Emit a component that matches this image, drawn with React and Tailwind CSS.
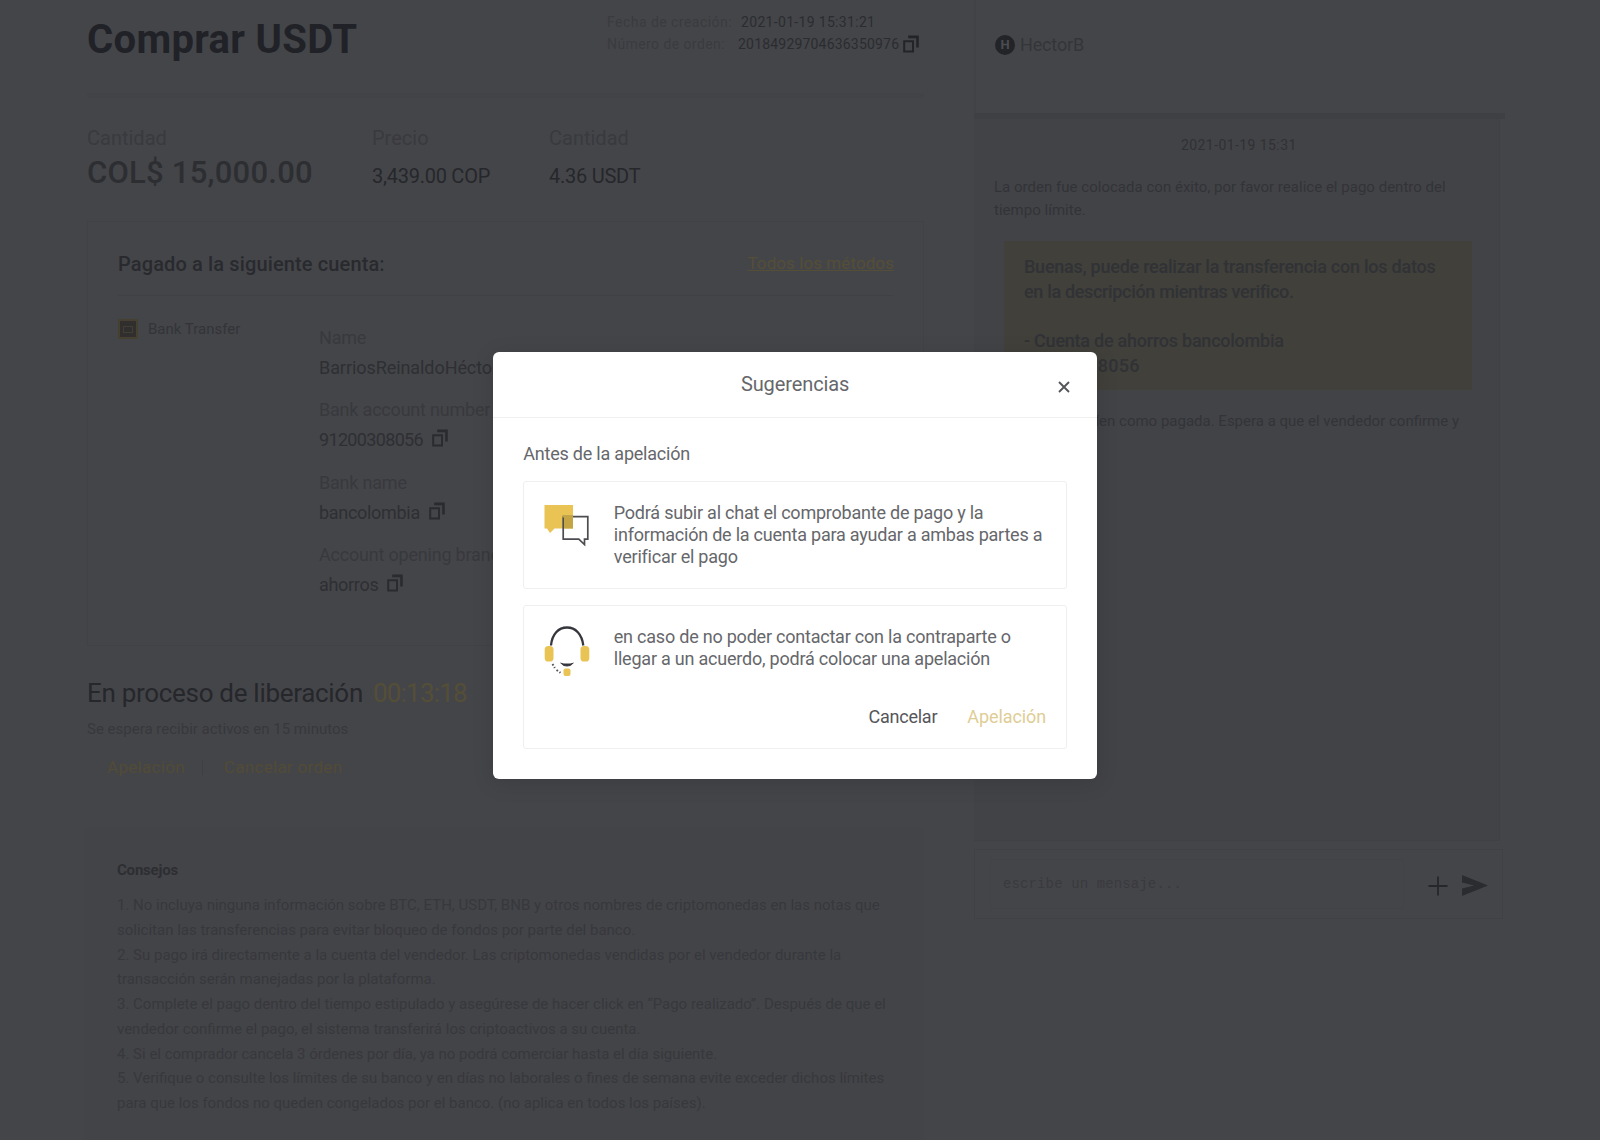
/**
 * P2P order page with the appeal suggestions dialog open.
 */
import React from 'react';

const STATS = [
  { label: 'Cantidad', value: 'COL$ 15,000.00', big: true },
  { label: 'Precio', value: '3,439.00 COP' },
  { label: 'Cantidad', value: '4.36 USDT' },
];

const ACCOUNT = [
  { label: 'Name', value: 'BarriosReinaldoHéctor', copy: false, track: 'tracking-[-0.07px]' },
  { label: 'Bank account number', value: '91200308056', copy: true, track: 'tracking-[-0.66px]' },
  { label: 'Bank name', value: 'bancolombia', copy: true, track: 'tracking-[-0.3px]' },
  { label: 'Account opening branch', value: 'ahorros', copy: true, track: 'tracking-[-0.3px]' },
];

const TIPS = [
  '1. No incluya ninguna información sobre BTC, ETH, USDT, BNB y otros nombres de criptomonedas en las notas que',
  'solicitan las transferencias para evitar bloqueo de fondos por parte del banco.',
  '2. Su pago irá directamente a la cuenta del vendedor. Las criptomonedas vendidas por el vendedor durante la',
  'transacción serán manejadas por la plataforma.',
  '3. Complete el pago dentro del tiempo estipulado y asegúrese de hacer click en “Pago realizado”. Después de que el',
  'vendedor confirme el pago, el sistema transferirá los criptoactivos a su cuenta.',
  '4. Si el comprador cancela 3 órdenes por día, ya no podrá comerciar hasta el día siguiente.',
  '5. Verifique o consulte los límites de su banco y en días no laborales o fines de semana evite exceder dichos límites',
  'para que los fondos no queden congelados por el banco. (no aplica en todos los países).',
];

const CopyIcon = ({ className }) => (
  <svg width="16" height="18" viewBox="0 0 16 18" fill="none" stroke="currentColor" strokeWidth="2" className={className}>
    <path d="M1.200 6.200h8.800v10.300H1.200z" />
    <path d="M5.200 1.900h9.300v10.600" strokeWidth="2.600" />
  </svg>
);

const ChatIcon = () => (
  <svg width="46" height="44" viewBox="0 0 46 44" fill="none">
    <path d="M0.500 0h28.500v23.500H10.500L6 28l-3-4.500H0.500z" fill="#e9c454" />
    <path d="M19.200 11.700h24.600v22.500h-3.300v5.400l-5.700-5.400H19.200z" stroke="#4c4d51" strokeWidth="1.700" />
    <path d="M18.300 10.800H29v12.700h-8.900V12.600h-1.800z" fill="#c4a443" />
  </svg>
);

const HeadsetIcon = () => (
  <svg width="46" height="52" viewBox="0 0 46 52" fill="none">
    <path d="M7 19.500C8 8 14.500 1.500 23 1.500S38 8 39.300 19.500" stroke="#36373c" strokeWidth="2.300" />
    <rect x="0.700" y="20" width="8.800" height="15.500" rx="3.600" fill="#e9c454" />
    <rect x="36.500" y="20" width="8.800" height="15.500" rx="3.600" fill="#e9c454" />
    <path d="M17.500 37.500c2.500 3.300 8.500 3.300 11 0l-2 0.600h-7z" fill="#36373c" stroke="#36373c" strokeWidth="1.200" />
    <path d="M8.500 38l2.300 4M12.500 44l4 2.800" stroke="#55565a" strokeWidth="2" strokeDasharray="1.800 1.800" />
    <rect x="19.500" y="42.500" width="7" height="7.500" rx="2" fill="#e9c454" />
  </svg>
);

const OrderHeader = () => (
  <header className="flex h-[98px] justify-between border-b-[5px] border-[#424347] pt-[11px]">
    <h1 className="mt-[5px] text-[40px] leading-[48px] font-bold tracking-[0.34px] text-[#202227]">Comprar USDT</h1>
    <div className="mr-[3px] w-[314px] text-sm leading-[22.5px]">
      <div className="flex gap-[9px]">
        <span className="tracking-[0.46px] text-[#3a3b3f]">Fecha de creación:</span>
        <span className="tracking-[0.32px] text-[#2b2c30]">2021-01-19 15:31:21</span>
      </div>
      <div className="-mt-px flex items-center">
        <span className="mr-[13px] tracking-[0.42px] text-[#3a3b3f]">Número de orden:</span>
        <span className="tracking-[0.19px] text-[#2b2c30]">20184929704636350976</span>
        <CopyIcon className="ml-[4px] text-[#232428]" />
      </div>
    </div>
  </header>
);

const Stats = () => (
  <div className="mt-7 grid h-[64px] grid-cols-[285px_177px_1fr]">
    {STATS.map((s, i) => (
      <div key={i}>
        <div className="text-xl leading-6 text-[#393a3e]">{s.label}</div>
        {s.big ? (
          <div className="mt-[5px] text-[31px] leading-9 font-medium tracking-[0.24px] text-[#2d2e32]">{s.value}</div>
        ) : (
          <div className="mt-[14px] text-xl leading-6 tracking-[-0.25px] text-[#26272b]">{s.value}</div>
        )}
      </div>
    ))}
  </div>
);

const PaymentCard = () => (
  <section className="mt-[31px] h-[425px] border border-[#414246] px-[30px] pt-[30px]">
    <div className="flex h-[44px] justify-between border-b border-[#404145]">
      <h2 className="text-xl leading-6 font-medium tracking-[0.13px] text-[#292a2e]">Pagado a la siguiente cuenta:</h2>
      <span className="-mr-px text-[17px] leading-[22px] tracking-[0.08px] text-[#554e37] underline">Todos los métodos</span>
    </div>
    <div className="flex pt-[23px]">
      <div className="flex w-[201px] items-start">
        <span className="flex h-5 w-5 items-center justify-center border-2 border-[#45402f] bg-[#302f2d]">
          <span className="h-[7px] w-[10px] border border-[#413e35]" />
        </span>
        <span className="ml-[10px] text-[15px] leading-[21px] text-[#333438]">Bank Transfer</span>
      </div>
      <div className="flex flex-col gap-[12.5px] pt-[3.5px]">
        {ACCOUNT.map((row) => (
          <div key={row.label} className="text-lg leading-[30px]">
            <div className="tracking-[-0.2px] text-[#38393d]">{row.label}</div>
            <div className="flex items-center">
              <span className={`${row.track} text-[#2e2f33]`}>{row.value}</span>
              {row.copy && <CopyIcon className="-mt-1 ml-[9px] text-[#2a2b2f]" />}
            </div>
          </div>
        ))}
      </div>
    </div>
  </section>
);

const ReleaseStatus = () => (
  <section className="mt-[31px] h-[150px]">
    <div className="flex gap-[10px] text-[26px] leading-8">
      <span className="tracking-[-0.3px] text-[#26272b]">En proceso de liberación</span>
      <span className="tracking-[-0.8px] text-[#554e37]">00:13:18</span>
    </div>
    <p className="mt-[8px] text-[15px] leading-6 text-[#37383c]">Se espera recibir activos en 15 minutos</p>
    <div className="mt-[14px] flex items-center pl-5 text-[17px] leading-6 tracking-[0.3px] text-[#524b36]">
      <button>Apelación</button>
      <span className="mx-[17px] h-[15px] w-px bg-[#3e3f43]" />
      <button className="ml-[4px]">Cancelar orden</button>
    </div>
  </section>
);

const Tips = () => (
  <section className="-ml-[3px] h-[314px] bg-[#434448] pt-[31px] pl-[33px] whitespace-nowrap">
    <h3 className="text-[15px] leading-6 font-bold tracking-[-0.2px] text-[#2d2e32]">Consejos</h3>
    <div className="mt-[11px] text-[15px] leading-[24.75px] text-[#37383c]">
      {TIPS.map((line) => (
        <div key={line}>{line}</div>
      ))}
    </div>
  </section>
);

const Chat = () => (
  <aside className="ml-[50px] w-[531px]">
    <div className="flex h-[113px] border-l-2 border-[#414246] pt-[35px] pl-[19px]">
      <span className="flex h-5 w-5 items-center justify-center rounded-full bg-[#232428] text-[13px] font-bold text-[#4b4c50]">
        H
      </span>
      <span className="ml-[5px] text-lg leading-5 tracking-[-0.16px] text-[#343539]">HectorB</span>
    </div>
    <div className="h-[6px] bg-[#3f4044]" />

    <div className="mr-[5px] h-[722px] border-r border-b border-[#404145] bg-[#424347] whitespace-nowrap">
      <div className="pt-[15px] pl-[207px] text-sm leading-[22px] tracking-[0.42px] text-[#303135]">2021-01-19 15:31</div>
      <div className="mt-[20px] pl-[20px] text-[15px] leading-[22.5px] tracking-[0.02px] text-[#323337]">
        <div>La orden fue colocada con éxito, por favor realice el pago dentro del</div>
        <div>tiempo límite.</div>
      </div>
      <div className="mt-[20px] ml-[30px] h-[149px] w-[468px] bg-[#41403b] pt-[14px] pl-5 text-lg leading-[24.8px] font-medium tracking-[-0.24px] text-[#303236]">
        <div>Buenas, puede realizar la transferencia con los datos</div>
        <div className="tracking-[-0.33px]">en la descripción mientras verifico.</div>
        <br />
        <div>- Cuenta de ahorros bancolombia</div>
        <div className="tracking-[0.3px]">91200308056</div>
      </div>
      <div className="mt-[20px] mr-[40px] text-right text-[15px] leading-[22.5px] text-[#333438]">
        Marcaste la orden como pagada. Espera a que el vendedor confirme y
      </div>
    </div>

    <div className="mt-2 flex h-[70px] w-[529px] items-center border border-[#404145]">
      <div className="ml-[15px] flex h-[50px] w-[414px] items-center border border-[#424347] pl-3 font-['Liberation_Mono'] text-[14px] text-[#393a3e]">
        <span className="tracking-[0.12px]">escribe un mensaje...</span>
      </div>
      <svg width="20" height="20" viewBox="0 0 20 20" className="mt-[3px] ml-[24px]" stroke="#26272b" strokeWidth="1.800">
        <path d="M10 0.500v19M0.500 10h19" />
      </svg>
      <svg width="26" height="21" viewBox="0 0 26 21" className="mt-[3px] ml-[14px]" fill="#2b2c30">
        <path d="M0 0l26 10.500L0 21v-7.500l12-3L0 7.500z" />
      </svg>
    </div>
  </aside>
);

const SuggestionsDialog = () => (
  <div
    role="dialog"
    className="absolute top-[351.500px] left-[493.300px] h-[427.500px] w-[603.700px] rounded-md bg-white whitespace-nowrap text-[#66676b] shadow-[0_4px_22px_rgba(0,0,0,0.12)]"
  >
    <div className="relative flex h-[66px] items-center justify-center border-b border-[#efefed] text-xl tracking-[-0.1px]">
      Sugerencias
      <svg width="12" height="12" viewBox="0 0 12 12" className="absolute top-[29px] right-[27px]" stroke="#55565a" strokeWidth="1.900">
        <path d="M1 1l10 10M11 1L1 11" />
      </svg>
    </div>
    <div className="px-[30px] text-lg tracking-[-0.22px]">
      <h2 className="mt-[24px] leading-6">Antes de la apelación</h2>
      <div className="mt-[15px] flex h-[108px] rounded-[3px] border border-[#efefed] pt-[20px] pl-[20px]">
        <div className="w-[69.500px] pt-[3px]">
          <ChatIcon />
        </div>
        <div className="leading-[22.400px]">
          <div>Podrá subir al chat el comprobante de pago y la</div>
          <div>información de la cuenta para ayudar a ambas partes a</div>
          <div>verificar el pago</div>
        </div>
      </div>
      <div className="mt-[16px] h-[144px] rounded-[3px] border border-[#efefed] px-[20px] pt-[20px]">
        <div className="flex h-[67px]">
          <div className="w-[69.500px]">
            <HeadsetIcon />
          </div>
          <div className="leading-[22.600px]">
            <div>en caso de no poder contactar con la contraparte o</div>
            <div>llegar a un acuerdo, podrá colocar una apelación</div>
          </div>
        </div>
        <div className="mt-[12px] flex justify-end gap-[30px] leading-6">
          <button className="text-[#55565a]">Cancelar</button>
          <button className="tracking-[-0.1px] text-[#dfcd96]">Apelación</button>
        </div>
      </div>
    </div>
  </div>
);

const App = () => (
  <div className="relative flex h-[1140px] w-[1600px] overflow-hidden bg-[#444549] pl-[87px] font-[Roboto,sans-serif]">
    <main className="w-[837px]">
      <OrderHeader />
      <Stats />
      <PaymentCard />
      <ReleaseStatus />
      <Tips />
    </main>
    <Chat />
    <SuggestionsDialog />
  </div>
);

export default App;
